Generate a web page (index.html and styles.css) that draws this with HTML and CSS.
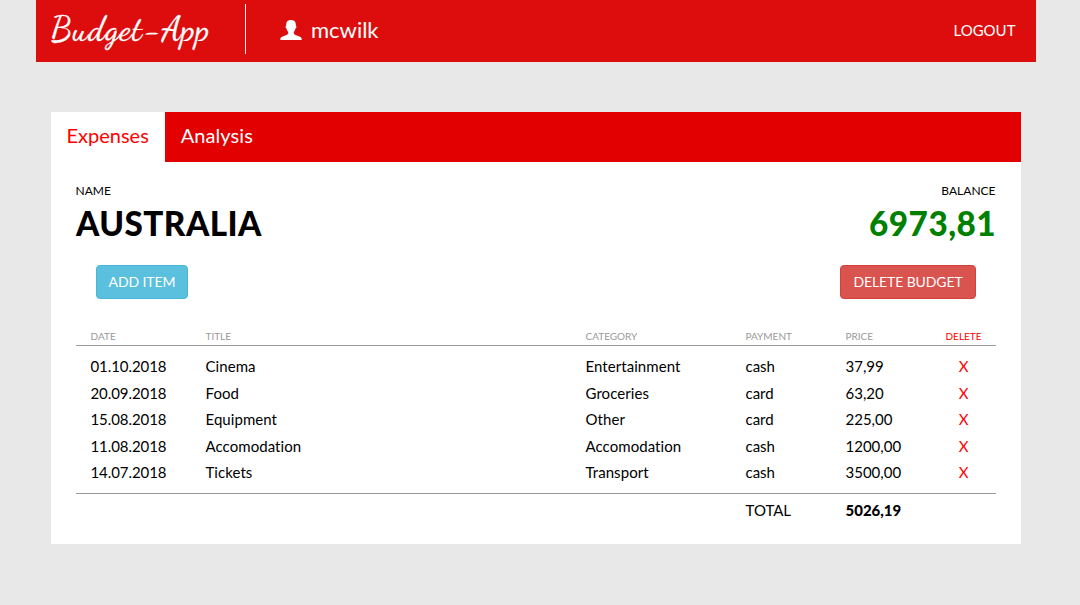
FILE: index.html
```html
<!DOCTYPE html>
<html lang="en">
<head>
<meta charset="utf-8">
<title>Budget-App</title>
<link rel="stylesheet" href="styles.css">
</head>
<body>
<div class="page">
  <header class="topbar">
    <div class="brand">Budget-App</div>
    <div class="user">
      <svg class="user-icon" viewBox="0 0 22 20" aria-hidden="true"><path d="M6.200 4.400C6.200 1.500 8 0 11 0s4.800 1.500 4.800 4.400v1.200c.5.2.7.6.6 1.300-.1.800-.4 1.300-.9 1.500-.3 1.500-.9 2.700-1.700 3.500v1.500c.2.700.7 1.100 1.600 1.500l4 1.500c1.300.5 2 1.100 2.200 2.100L21.700 20H.3l.1-1.500c.2-1 .9-1.600 2.200-2.100l4-1.500c.9-.4 1.400-.8 1.600-1.500v-1.500c-.8-.8-1.400-2-1.700-3.500-.5-.2-.8-.7-.9-1.500-.1-.7.1-1.100.6-1.300z"/></svg>
      <span>mcwilk</span>
    </div>
    <a class="logout">LOGOUT</a>
  </header>
  <main class="panel">
    <nav class="tabs">
      <a class="tab active">Expenses</a>
      <a class="tab">Analysis</a>
    </nav>
    <section class="content">
      <div class="summary">
        <div><div class="label">NAME</div><div class="value">AUSTRALIA</div></div>
        <div class="balance"><div class="label">BALANCE</div><div class="value">6973,81</div></div>
      </div>
      <div class="actions">
        <button class="btn info">ADD ITEM</button>
        <button class="btn danger">DELETE BUDGET</button>
      </div>
      <div class="row head"><span>DATE</span><span>TITLE</span><span>CATEGORY</span><span>PAYMENT</span><span>PRICE</span><span class="del">DELETE</span></div>
      <div class="items">
        <div class="row"><span>01.10.2018</span><span>Cinema</span><span>Entertainment</span><span>cash</span><span>37,99</span><span class="del">X</span></div>
        <div class="row"><span>20.09.2018</span><span>Food</span><span>Groceries</span><span>card</span><span>63,20</span><span class="del">X</span></div>
        <div class="row"><span>15.08.2018</span><span>Equipment</span><span>Other</span><span>card</span><span>225,00</span><span class="del">X</span></div>
        <div class="row"><span>11.08.2018</span><span>Accomodation</span><span>Accomodation</span><span>cash</span><span>1200,00</span><span class="del">X</span></div>
        <div class="row"><span>14.07.2018</span><span>Tickets</span><span>Transport</span><span>cash</span><span>3500,00</span><span class="del">X</span></div>
      </div>
      <div class="row total"><span></span><span></span><span></span><span>TOTAL</span><strong>5026,19</strong></div>
    </section>
  </main>
</div>
</body>
</html>
```
FILE: styles.css
```css
* { box-sizing: border-box; }
body { margin: 0; background: #e8e8e8; color: #000; font: 15px/1.428571 Lato, sans-serif; font-variant-ligatures: none; }
.page { width: 1000px; margin-left: 36px; }
.topbar { height: 62px; background: #de0d0d; color: #fff; display: flex; align-items: center; padding: 0 20.5px 0 15px; }
.brand { width: 195px; height: 50px; margin-top: -4px; border-right: 1px solid #fff; font: 34px/52px "Dancing Script", cursive; letter-spacing: 1px; -webkit-text-stroke: .35px #fff; white-space: nowrap; }
.user { display: flex; align-items: center; gap: 9px; margin: -2px 0 0 34px; font-size: 22px; line-height: 30px; }
.user-icon { width: 22px; height: 20px; fill: #fff; }
.logout { margin-left: auto; }
.panel { margin: 50px 15px 0; height: 432px; background: #fff; }
.tabs { display: flex; height: 50px; background: #e30000; font-size: 20px; line-height: 46px; }
.tab { padding: 0 16.3px 0 15.5px; color: #fff; }
.tab.active { background: #fff; color: #f00; }
.tab:last-child { letter-spacing: .1px; }
.content { padding: 20px 25px 0; }
.summary { display: flex; justify-content: space-between; }
.label { font-size: 12px; line-height: 18px; margin-left: -.5px; }
.balance .label { margin: 0 .5px 0 0; }
.value { font-size: 33.3px; line-height: 46px; height: 46px; font-weight: 900; letter-spacing: .45px; }
.balance { text-align: right; }
.balance .value { color: #008000; }
.actions { display: flex; justify-content: space-between; padding: 19px 20px 0; }
.btn { height: 34px; padding: 0; border: 1px solid; border-radius: 4px; color: #fff; font: 14px/20px Lato, sans-serif; letter-spacing: -.1px; }
.info { width: 92px; background: #5bc0de; border-color: #46b8da; }
.danger { width: 136px; background: #d9534f; border-color: #d43f3a; }
.row { display: grid; grid-template-columns: 115px 380px 160px 100px 85px 66px; padding-left: 14.5px; line-height: 26.5px; }
.head { margin-top: 30px; height: 17px; border-bottom: 1px solid #999; color: #999; font-size: 10px; line-height: 14px; }
.del { color: #f00; text-align: center; }
.items { height: 148px; padding-top: 7px; border-bottom: 1px solid #999; }
.items .row span:nth-child(1) { letter-spacing: -.08px; }
.items .row span:nth-child(2), .items .row span:nth-child(3) { letter-spacing: .06px; }
.total { padding-top: 3px; }
.total strong { font-weight: 900; }
```
